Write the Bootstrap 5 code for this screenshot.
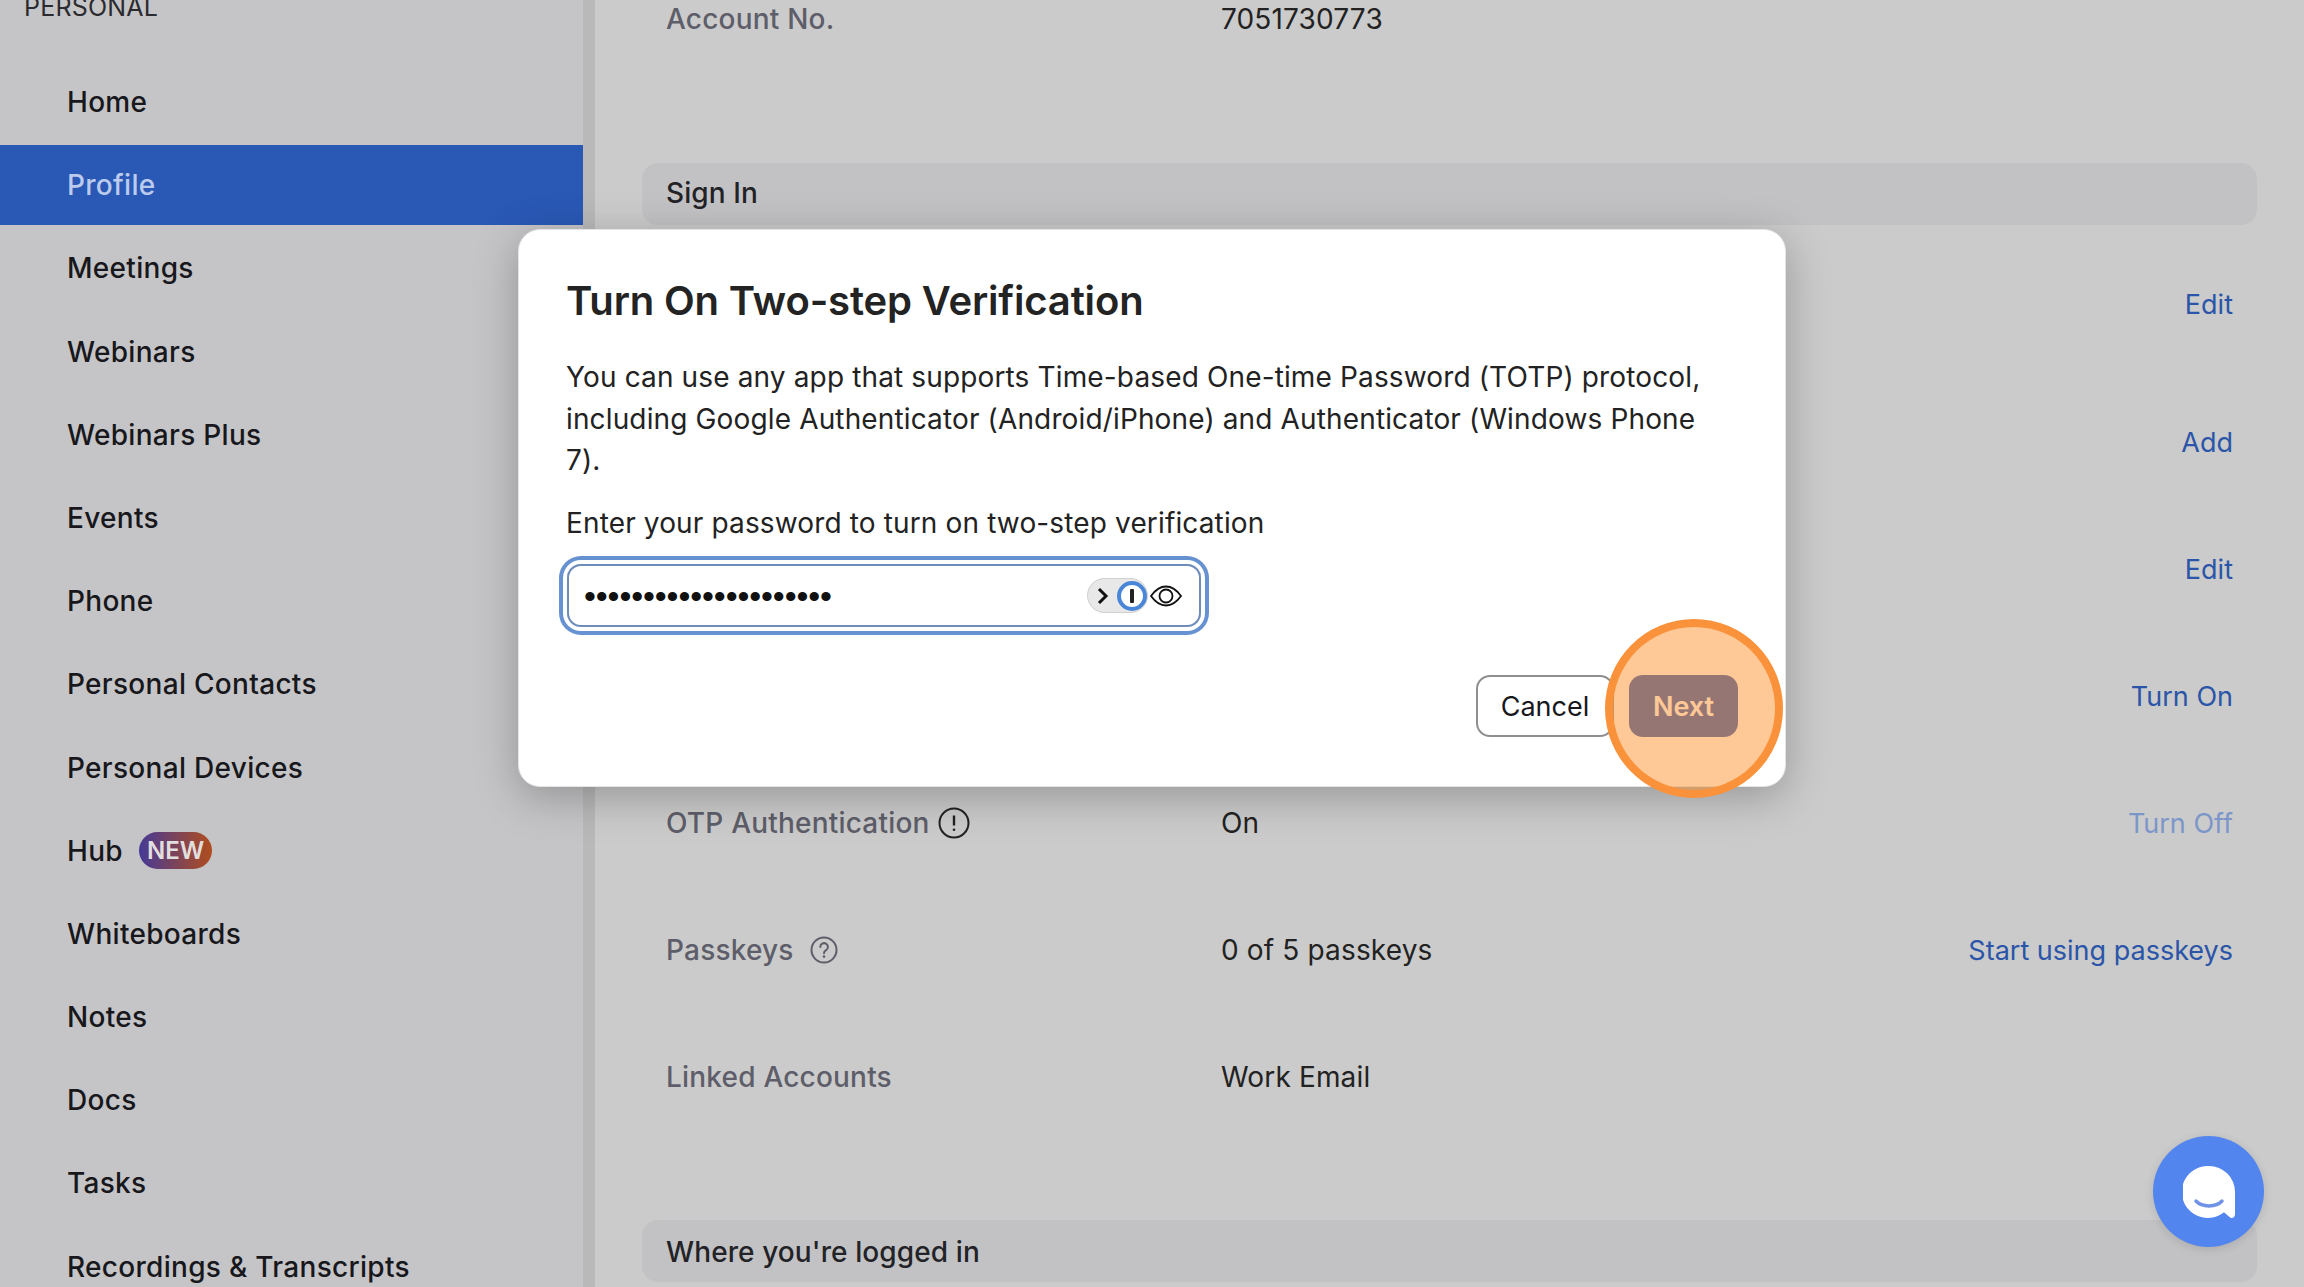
<!DOCTYPE html>
<html lang="en">
<head>
  <meta charset="UTF-8">
  <title>Profile</title>
  <link href="https://cdn.jsdelivr.net/npm/bootstrap@5.3.2/dist/css/bootstrap.min.css" rel="stylesheet">
  <style>
    html, body { height: 100%; }
    body { background: #cbcbcb; font-family: Inter, "Liberation Sans", sans-serif; font-size: 28px; color: #222; overflow: hidden; position: relative; }
    .page-wrap { height: 1287px; overflow: hidden; }

    .side-col { width: 583px; background: #c5c5c7; flex-shrink: 0; height: 1287px; overflow: hidden; }
    .side-head { font-size: 25px; letter-spacing: .2px; line-height: 32px; margin-top: -9px; padding-left: 24px; color: #2b2b2f; height: 71px; }
    .side-link { display: flex; align-items: center; gap: 16px; height: 80px; margin-bottom: 3.2px; padding-left: 67px; color: #17171c; text-decoration: none; font-weight: 450; letter-spacing: .3px; }
    .side-link.active-item { background: #2958b5; color: #bccbed; }
    .new-tag { background: linear-gradient(90deg, #463a96, #b04d1e); color: #e2dede; font-size: 24px; font-weight: 600; line-height: 37px; height: 37px; padding: 0 8px; border-radius: 19px; letter-spacing: 0; }
    .side-strip { width: 12px; flex-shrink: 0; background: #b9b9ba; }

    .main-col { padding: 0 47px; margin-top: -45px; min-width: 0; }
    .info-row { height: 127px; padding: 0 24px; }
    .info-row.first-row { margin-top: 16px; height: 126px; margin-bottom: 11px; }
    .info-label { width: 555px; color: #5e5e6a; font-weight: 500; flex-shrink: 0; letter-spacing: .2px; }
    .info-value { letter-spacing: .15px; }
    .info-action { color: #2a55a8; text-decoration: none; margin-left: auto; font-size: 27px; padding-top: 3px; }
    .info-action.off-action { color: #7d96ca; }
    .band-title { height: 62px; padding: 0 24px; background: #c2c2c4; border-radius: 16px; color: #222227; font-weight: 500; letter-spacing: .1px; }
    .band-one { margin-top: 81px; padding-bottom: 2px; }
    .band-two { margin-top: 80px; padding-top: 2px; }

    .dialog-box { position: absolute; left: 518px; top: 229px; width: 1268px; height: 558px; background: #fff; border: 1px solid #e4e4e4; border-radius: 22px; box-shadow: 0 10px 44px rgba(0, 0, 0, .26); padding: 0 47px; }
    .dialog-title { font-size: 40px; font-weight: 600; line-height: 50px; margin: 46px 0 31px; color: #232323; letter-spacing: -.15px; }
    .dialog-text { line-height: 41.5px; margin-bottom: 21px; color: #222; letter-spacing: .14px; }
    .dialog-body { width: 1150px; }
    .pass-field { width: 634px; height: 63px; margin: 20px 0 0 1px; padding: 0 17px 0 15px; border: 2px solid #6e8db8; border-radius: 14px; box-shadow: 0 0 0 4px #fff, 0 0 0 8px #6692d2; }
    .pass-dots { font-family: "Liberation Sans", sans-serif; font-size: 34px; letter-spacing: -.1px; color: #111; line-height: 1; }
    .pw-pill { width: 61px; height: 35px; border-radius: 18px; background: #e8e8e8; border: 1px solid #cfcfcf; padding-left: 9px; margin-right: 2px; }
    .dialog-actions { margin-top: 48px; gap: 15px; }
    .btn.cancel-btn, .btn.next-btn { height: 62px; font-size: 27px; border-radius: 14px; padding: 0 22px; line-height: 1; }
    .btn.cancel-btn { width: 138px; background: #fff; border: 2px solid #8f8f8f; color: #17171c; }
    .btn.next-btn { width: 109px; background: #2d5ab6; border: 0; color: #fff; font-weight: 600; }

    .click-ring { position: absolute; left: 1605px; top: 619px; width: 178px; height: 179px; border-radius: 50%; background: rgba(255, 145, 48, .5); border: 8px solid #f9923b; pointer-events: none; }
    .chat-bubble { position: absolute; left: 2153px; top: 1136px; width: 111px; height: 111px; border-radius: 50%; background: #5385ee; box-shadow: 0 2px 10px rgba(0, 0, 0, .12); }
  </style>
</head>
<body>
  <div class="page-wrap d-flex">
    <nav class="side-col">
      <div class="side-head">PERSONAL</div>
      <a class="side-link" href="#">Home</a>
      <a class="side-link active-item" href="#">Profile</a>
      <a class="side-link" href="#">Meetings</a>
      <a class="side-link" href="#">Webinars</a>
      <a class="side-link" href="#">Webinars Plus</a>
      <a class="side-link" href="#">Events</a>
      <a class="side-link" href="#">Phone</a>
      <a class="side-link" href="#">Personal Contacts</a>
      <a class="side-link" href="#">Personal Devices</a>
      <a class="side-link" href="#">Hub <span class="new-tag">NEW</span></a>
      <a class="side-link" href="#">Whiteboards</a>
      <a class="side-link" href="#">Notes</a>
      <a class="side-link" href="#">Docs</a>
      <a class="side-link" href="#">Tasks</a>
      <a class="side-link" href="#">Recordings &amp; Transcripts</a>
    </nav>
    <div class="side-strip"></div>
    <main class="main-col flex-grow-1">
      <div class="info-row d-flex align-items-center">
        <div class="info-label">Account No.</div>
        <div class="info-value">7051730773</div>
      </div>

      <div class="band-title band-one d-flex align-items-center">Sign In</div>
      <div class="info-row first-row d-flex align-items-center"><a class="info-action" href="#">Edit</a></div>
      <div class="info-row d-flex align-items-center"><a class="info-action" href="#">Add</a></div>
      <div class="info-row d-flex align-items-center"><a class="info-action" href="#">Edit</a></div>
      <div class="info-row d-flex align-items-center"><a class="info-action" href="#">Turn On</a></div>
      <div class="info-row d-flex align-items-center">
        <div class="info-label d-flex align-items-center gap-2">OTP Authentication
          <svg width="32" height="32" viewBox="0 0 32 32" fill="none" stroke="#222" stroke-width="2"><circle cx="16" cy="16" r="14.5"/><path d="M16 8.5v10" stroke-width="2.4"/><circle cx="16" cy="22.8" r="1.3" fill="#222" stroke="none"/></svg>
        </div>
        <div class="info-value">On</div>
        <a class="info-action off-action" href="#">Turn Off</a>
      </div>
      <div class="info-row d-flex align-items-center">
        <div class="info-label d-flex align-items-center gap-3">Passkeys
          <svg width="28" height="28" viewBox="0 0 28 28" fill="none" stroke="#5e5e6a" stroke-width="2"><circle cx="14" cy="14" r="12.5"/><path d="M10.3 11a3.8 3.8 0 1 1 5.8 3.2c-1.4.9-2.1 1.4-2.1 3" stroke-linecap="round"/><circle cx="14" cy="20.6" r="1.3" fill="#5e5e6a" stroke="none"/></svg>
        </div>
        <div class="info-value">0 of 5 passkeys</div>
        <a class="info-action" href="#">Start using passkeys</a>
      </div>
      <div class="info-row d-flex align-items-center">
        <div class="info-label">Linked Accounts</div>
        <div class="info-value">Work Email</div>
      </div>

      <div class="band-title band-two d-flex align-items-center">Where you're logged in</div>
    </main>
  </div>

  <div class="dialog-box">
    <h2 class="dialog-title">Turn On Two-step Verification</h2>
    <p class="dialog-text dialog-body">You can use any app that supports Time-based One-time Password (TOTP) protocol, including Google Authenticator (Android/iPhone) and Authenticator (Windows Phone 7).</p>
    <p class="dialog-text mb-3">Enter your password to turn on two-step verification</p>
    <div class="pass-field d-flex align-items-center justify-content-between">
      <span class="pass-dots">•••••••••••••••••••••</span>
      <span class="d-flex align-items-center">
        <span class="pw-pill d-flex align-items-center gap-2">
          <svg width="12" height="18" viewBox="0 0 12 18" fill="none" stroke="#111" stroke-width="3"><path d="M2 2l7 7-7 7"/></svg>
          <svg width="30" height="30" viewBox="0 0 30 30"><circle cx="15" cy="15" r="13" fill="#fff" stroke="#4a86d8" stroke-width="4"/><rect x="13" y="8" width="4" height="14" rx="1" fill="#222"/></svg>
        </span>
        <svg width="32" height="22" viewBox="0 0 32 22" fill="none" stroke="#111" stroke-width="1.8"><path d="M1 11C6 4 11 1.500 16 1.500S26 4 31 11c-5 7-10 9.500-15 9.500S6 18 1 11z"/><circle cx="16" cy="11" r="6.500"/></svg>
      </span>
    </div>
    <div class="dialog-actions d-flex justify-content-end">
      <button type="button" class="btn cancel-btn">Cancel</button>
      <button type="button" class="btn next-btn">Next</button>
    </div>
  </div>

  <div class="click-ring"></div>

  <div class="chat-bubble d-flex align-items-center justify-content-center">
    <svg width="52" height="52" viewBox="0 0 52 52"><path d="M26 0a26 26 0 0 1 26 26v22c0 4-3.500 5-5.500 3L41 46.300A26 26 0 1 1 26 0z" fill="#fff"/><path d="M13 35c6 6.500 20 6.500 26 0" fill="none" stroke="#6f93e6" stroke-width="3.500" stroke-linecap="round"/></svg>
  </div>
</body>
</html>
